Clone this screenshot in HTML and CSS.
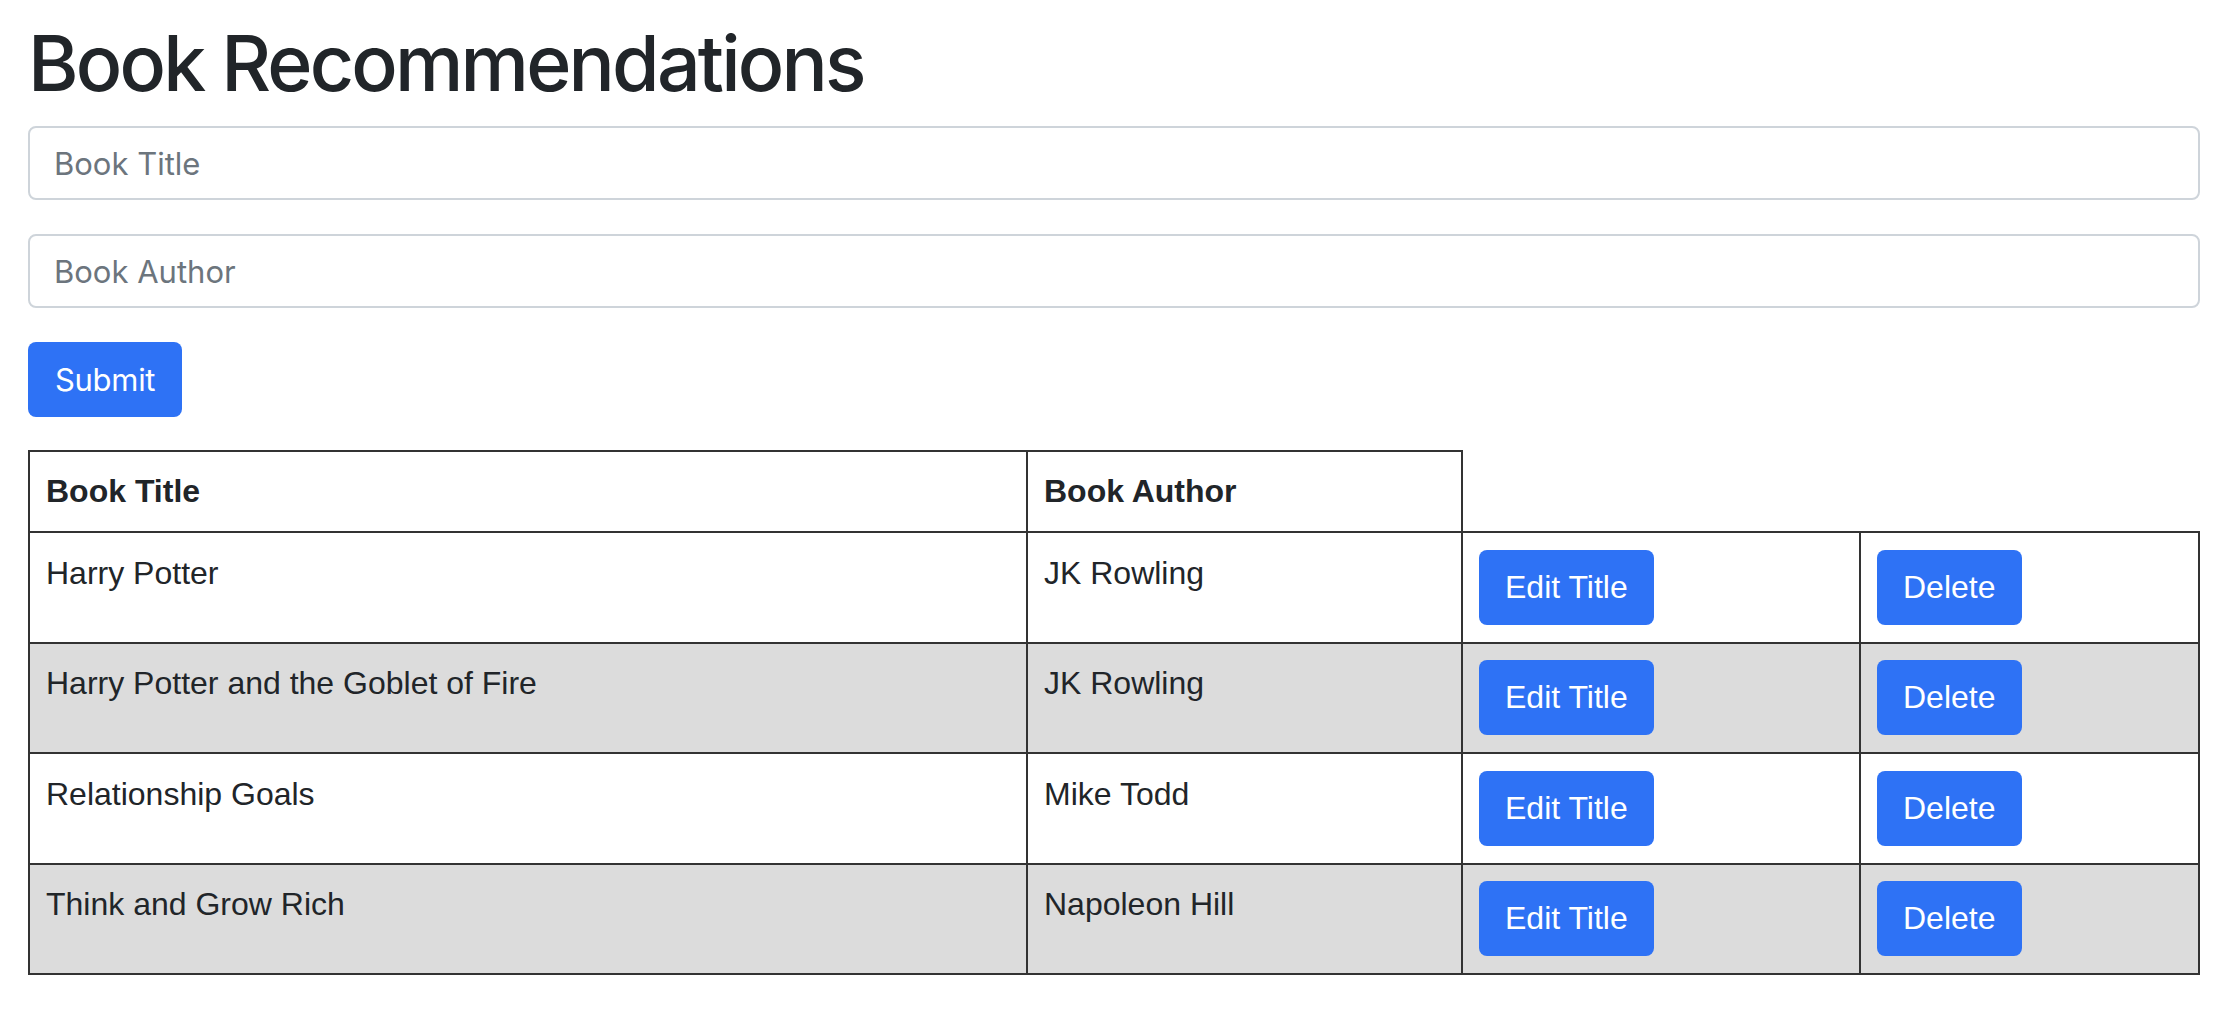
FILE: index.html
```html
<!DOCTYPE html>
<html lang="en">
<head>
<meta charset="utf-8">
<title>Book Recommendations</title>
<link rel="stylesheet" href="styles.css">
</head>
<body>
<div class="page">
  <h1 class="title">Book Recommendations</h1>
  <form class="book-form">
    <div class="form-group">
      <input class="form-control" type="text" placeholder="Book Title">
    </div>
    <div class="form-group">
      <input class="form-control" type="text" placeholder="Book Author">
    </div>
    <button class="btn btn-submit" type="button">Submit</button>
  </form>
  <table class="book-table">
    <colgroup>
      <col class="col-title">
      <col class="col-author">
      <col class="col-edit">
      <col class="col-delete">
    </colgroup>
    <thead>
      <tr>
        <th>Book Title</th>
        <th>Book Author</th>
      </tr>
    </thead>
    <tbody>
      <tr>
        <td>Harry Potter</td>
        <td>JK Rowling</td>
        <td><button class="btn btn-cell" type="button">Edit Title</button></td>
        <td><button class="btn btn-cell" type="button">Delete</button></td>
      </tr>
      <tr class="alt">
        <td>Harry Potter and the Goblet of Fire</td>
        <td>JK Rowling</td>
        <td><button class="btn btn-cell" type="button">Edit Title</button></td>
        <td><button class="btn btn-cell" type="button">Delete</button></td>
      </tr>
      <tr>
        <td>Relationship Goals</td>
        <td>Mike Todd</td>
        <td><button class="btn btn-cell" type="button">Edit Title</button></td>
        <td><button class="btn btn-cell" type="button">Delete</button></td>
      </tr>
      <tr class="alt">
        <td>Think and Grow Rich</td>
        <td>Napoleon Hill</td>
        <td><button class="btn btn-cell" type="button">Edit Title</button></td>
        <td><button class="btn btn-cell" type="button">Delete</button></td>
      </tr>
    </tbody>
  </table>
</div>
</body>
</html>
```

FILE: styles.css
```css
html, body {
  margin: 0;
  padding: 0;
  background: #ffffff;
}

body {
  font-family: Inter, "Noto Sans", sans-serif;
  color: #212529;
  font-size: 31px;
  line-height: 1.5;
}

.page {
  padding: 16px 34px 0 28px;
}

.title {
  margin: 0 0 16px 0;
  font-family: Inter, "Noto Sans", sans-serif;
  font-weight: 500;
  font-size: 77px;
  line-height: 94px;
  letter-spacing: -2.8px;
  color: #212529;
}

.book-form {
  margin: 0 0 33px 0;
}

.form-group {
  margin-bottom: 34px;
}

.form-control {
  display: block;
  box-sizing: border-box;
  width: 100%;
  height: 74px;
  padding: 0 24px;
  font-family: Inter, "Noto Sans", sans-serif;
  font-size: 31px;
  color: #495057;
  background: #ffffff;
  border: 2px solid #ced4da;
  border-radius: 8px;
  outline: none;
}

.form-control::placeholder {
  color: #6c757d;
  opacity: 1;
}

.btn {
  display: inline-block;
  vertical-align: top;
  box-sizing: border-box;
  height: 75px;
  padding: 0 27px;
  font-size: 31px;
  line-height: 75px;
  color: #ffffff;
  background: #2e72f5;
  border: none;
  border-radius: 8px;
  cursor: pointer;
}

.btn-submit {
  font-family: Inter, "Noto Sans", sans-serif;
  letter-spacing: -0.3px;
}

.btn-cell {
  font-family: "Liberation Sans", Arial, sans-serif;
  font-size: 32px;
  padding: 0 26px;
}

.book-table {
  width: 2172px;
  table-layout: fixed;
  border-collapse: collapse;
  font-family: "Liberation Sans", Arial, sans-serif;
  font-size: 32px;
  line-height: 46px;
  color: #212529;
}

.col-title { width: 998px; }
.col-author { width: 435px; }
.col-edit { width: 398px; }
.col-delete { width: 339px; }

.book-table th,
.book-table td {
  border: 2px solid #333333;
  padding: 16px 16px 17px 16px;
  text-align: left;
  vertical-align: top;
}

.book-table td {
  height: 75px;
  padding-top: 16.5px;
}

.book-table th {
  font-weight: 700;
}

.book-table tr.alt td {
  background: #dcdcdc;
}
```
